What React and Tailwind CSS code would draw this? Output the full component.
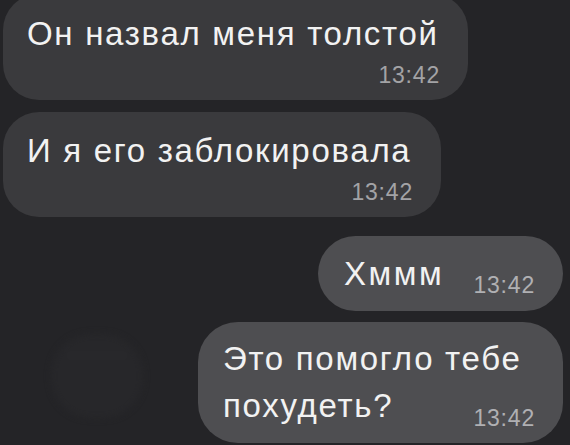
import React from 'react'

const font = { fontFamily: '"Liberation Sans", Arial, sans-serif' }

function Time({ className = '' }) {
  return <span className={`whitespace-nowrap text-[23px] leading-[26px] tracking-[0.8px] text-[#a3a3a6] ${className}`}>13:42</span>
}

function Incoming({ text, width, className = '' }) {
  return (
    <div className={`flex flex-col rounded-[36px] bg-[#3a3a3d] pl-[24px] pr-[28px] pb-[12px] ${width} ${className}`}>
      <span className="whitespace-nowrap text-[33px] leading-[36px] tracking-[1.7px] text-[#f2f2f2]">{text}</span>
      <Time className="mt-[10px] self-end" />
    </div>
  )
}

export default function App() {
  return (
    <div className="h-[445px] w-[570px] overflow-hidden bg-[#242427]" style={font}>
      <div className="flex flex-col pl-[3px] pr-[7px]">
        <Incoming text="Он назвал меня толстой" width="w-[465px]" className="-mt-[6px] pt-[22px]" />
        <Incoming text="И я его заблокировала" width="w-[438px]" className="mt-[12px] pt-[21px]" />

        <div className="mt-[19px] flex h-[75px] w-[245px] items-start self-end rounded-full bg-[#4e4e51] pl-[26px] pr-[28px] pt-[20px]">
          <span className="whitespace-nowrap text-[33px] leading-[36px] tracking-[2.5px] text-[#f2f2f2]">Хммм</span>
          <Time className="ml-auto mt-[16px] text-[#b0b0b3]" />
        </div>

        <div className="mt-[11px] flex items-start justify-between">
          <div className="ml-[48px] mt-[12px] h-[84px] w-[92px] rounded-[40px] bg-[#27272a] blur-[3px]">
            <div className="mx-auto mt-[20px] h-[3px] w-[60px] rounded bg-[#2b2b2e]" />
          </div>
          <div className="flex h-[121px] w-[365px] flex-col rounded-[40px] bg-[#4e4e51] pb-[14px] pl-[25px] pr-[28px] pt-[13px]">
            <span className="whitespace-nowrap text-[33px] leading-[47px] tracking-[1.7px] text-[#f2f2f2]">Это помогло тебе</span>
            <div className="flex items-end justify-between">
              <span className="whitespace-nowrap text-[33px] leading-[47px] tracking-[1.7px] text-[#f2f2f2]">похудеть?</span>
              <Time className="-mb-[2px] text-[#b0b0b3]" />
            </div>
          </div>
        </div>
      </div>
    </div>
  )
}
